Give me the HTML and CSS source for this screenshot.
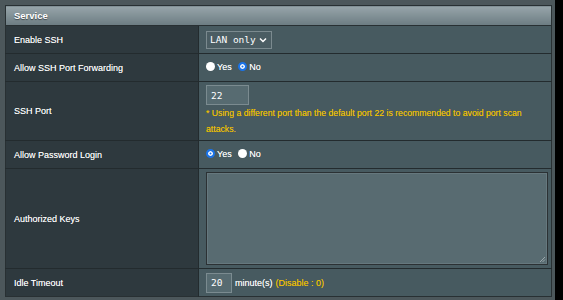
FILE: index.html
```html
<!DOCTYPE html>
<html lang="en">
<head>
    <meta charset="UTF-8">
    <meta name="viewport" content="width=device-width, initial-scale=1.0">
    <title>Service</title>
    <link rel="stylesheet" href="styles.css">
</head>
<body>
    <div class="page">
        <div class="main">
            <table class="form-table">
                <thead>
                    <tr>
                        <th colspan="2">Service</th>
                    </tr>
                </thead>
                <tbody>
                    <tr class="row">
                        <td class="label">Enable SSH</td>
                        <td class="value">
                            <div class="select">
                                <span>LAN only</span>
                                <svg width="8" height="6" viewBox="0 0 8 6"><path d="M1 1.5 L4 4.5 L7 1.5" fill="none" stroke="#fff" stroke-width="1.5"/></svg>
                            </div>
                        </td>
                    </tr>
                    <tr class="row">
                        <td class="label">Allow SSH Port Forwarding</td>
                        <td class="value">
                            <label class="radio"><span class="dot"></span>Yes</label>
                            <label class="radio"><span class="dot checked"></span>No</label>
                        </td>
                    </tr>
                    <tr class="row tall">
                        <td class="label">SSH Port</td>
                        <td class="value">
                            <div class="text-input wide">22</div>
                            <div class="hint">* Using a different port than the default port 22 is recommended to avoid port scan attacks.</div>
                        </td>
                    </tr>
                    <tr class="row">
                        <td class="label">Allow Password Login</td>
                        <td class="value">
                            <label class="radio"><span class="dot checked"></span>Yes</label>
                            <label class="radio"><span class="dot"></span>No</label>
                        </td>
                    </tr>
                    <tr class="row keys">
                        <td class="label">Authorized Keys</td>
                        <td class="value">
                            <div class="textarea">
                                <svg class="grip" width="7" height="7" viewBox="0 0 7 7"><path d="M6 1 L1 6 M6 3.5 L3.5 6" stroke="#9aa7ab" stroke-width="1"/></svg>
                            </div>
                        </td>
                    </tr>
                    <tr class="row">
                        <td class="label">Idle Timeout</td>
                        <td class="value">
                            <div class="inline">
                                <div class="text-input">20</div>
                                <span>minute(s)</span>
                                <span class="hint">(Disable : 0)</span>
                            </div>
                        </td>
                    </tr>
                </tbody>
            </table>
        </div>
        <div class="side"></div>
    </div>
</body>
</html>
```
FILE: styles.css
```css
body {
    margin: 0;
    background-color: #4c575b;
    font-family: "Liberation Sans", Arial, sans-serif;
    font-size: 9px;
    color: #fff;
}

.page {
    display: flex;
    height: 300px;
}

.main {
    width: 555px;
    padding: 5px 0 0 5px;
    box-sizing: border-box;
}

.side {
    flex: 1;
    background-color: #000;
}

.form-table {
    width: 547px;
    border-collapse: collapse;
    border: 1px solid #283033;
}

.form-table th {
    height: 19px;
    padding: 0 0 0 8px;
    text-align: left;
    font-size: 9.5px;
    font-weight: bold;
    text-shadow: 0 1px 1px rgba(0, 0, 0, 0.5);
    background: linear-gradient(#97a5aa, #6c7c82);
    border-bottom: 1px solid #283033;
}

.row td {
    height: 27px;
    border-top: 1px solid #232b2e;
    padding: 0;
    text-shadow: 0 0 0.4px rgba(255, 255, 255, 0.6);
}

.label {
    width: 184px;
    padding-left: 8px !important;
    background-color: #2e393e;
    border-right: 1px solid #232b2e;
}

.value {
    background-color: #475a60;
    padding-left: 7px !important;
}

.select {
    display: inline-flex;
    align-items: center;
    justify-content: space-between;
    width: 66px;
    height: 18px;
    padding: 0 4px 0 3px;
    box-sizing: border-box;
    border: 1px solid #7b8a8f;
    background-color: #4b5d63;
    font-family: "DejaVu Sans Mono", monospace;
    font-size: 9.5px;
    text-shadow: none;
}

.radio {
    display: inline-flex;
    align-items: center;
    margin-right: 4px;
}

.dot {
    width: 9px;
    height: 9px;
    box-sizing: border-box;
    border-radius: 50%;
    background-color: #fff;
    margin-right: 2px;
}

.dot.checked {
    border: 2px solid #1a73e8;
    box-shadow: inset 0 0 0 1.5px #fff;
    background-color: #1a73e8;
}

.tall td {
    height: 58px;
}

.text-input {
    display: flex;
    align-items: center;
    width: 26px;
    height: 20px;
    padding-left: 4px;
    box-sizing: border-box;
    border: 1px solid #7b8b90;
    background-color: #576b71;
    font-family: "DejaVu Sans Mono", monospace;
    font-size: 9.5px;
    text-shadow: none;
}

.text-input.wide {
    width: 43px;
}

.hint {
    color: #f2c200;
    font-size: 8.7px;
    line-height: 16px;
    text-shadow: 0 0 0.4px rgba(242, 194, 0, 0.6);
}

.keys td {
    height: 99px;
}

.textarea {
    position: relative;
    width: 342px;
    height: 93px;
    box-sizing: border-box;
    border: 1px solid #2b3134;
    box-shadow: inset 0 0 0 1px #66787e;
    background-color: #586b71;
}

.grip {
    position: absolute;
    right: 1px;
    bottom: 1px;
}

.inline {
    display: flex;
    align-items: center;
    gap: 3px;
}

.inline .hint {
    font-size: 9px;
    line-height: normal;
}
```
